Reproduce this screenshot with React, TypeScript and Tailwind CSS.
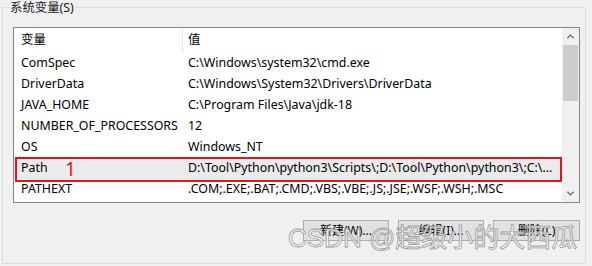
import { ChevronUp, ChevronDown } from 'lucide-react';

const rows = [
  { name: 'ComSpec', value: 'C:\\Windows\\system32\\cmd.exe' },
  { name: 'DriverData', value: 'C:\\Windows\\System32\\Drivers\\DriverData' },
  { name: 'JAVA_HOME', value: 'C:\\Program Files\\Java\\jdk-18' },
  { name: 'NUMBER_OF_PROCESSORS', value: '12' },
  { name: 'OS', value: 'Windows_NT' },
  { name: 'Path', value: 'D:\\Tool\\Python\\python3\\Scripts\\;D:\\Tool\\Python\\python3\\;C:\\...', selected: true },
  { name: 'PATHEXT', value: '.COM;.EXE;.BAT;.CMD;.VBS;.VBE;.JS;.JSE;.WSF;.WSH;.MSC' },
];

const font = "font-['Noto_Sans','Noto_Sans_CJK_SC',sans-serif]";

export default function App() {
  return (
    <div className={`w-[592px] h-[266px] bg-[#f0f0f0] overflow-hidden relative text-[12px] text-black ${font}`}>
      {/* group box */}
      <div className="relative ml-[2px] mt-[7px] w-[584px] h-[257px] border border-[#dcdcdc]">
        <span className="absolute left-[6px] top-[-8px] px-[1px] bg-[#f0f0f0] leading-[16px] text-[12.4px] text-[#1a1a1a]">
          系统变量(S)
        </span>

        {/* list view */}
        <div className="relative ml-[10px] mt-[19px] w-[567px] h-[176px] border border-[#828790] bg-white flex text-[12.4px]">
          <div className="w-[548px] overflow-hidden">
            <div className="flex h-[25px] items-center">
              <div className="w-[168px] pl-[7px] h-full flex items-center">变量</div>
              <div className="w-px h-full bg-[#e5e5e5]" />
              <div className="pl-[5px]">值</div>
            </div>
            {rows.map((r) => (
              <div
                key={r.name}
                className={`flex h-[21px] items-center whitespace-nowrap ${r.selected ? 'bg-[#ebebeb]' : ''}`}
              >
                <div className="w-[169px] pl-[7px]">{r.name}</div>
                <div className="pl-[5px]">{r.value}</div>
              </div>
            ))}
          </div>

          {/* scrollbar */}
          <div className="w-[17px] h-full bg-[#f0f0f0] flex flex-col items-center">
            <div className="h-[17px] flex items-center justify-center">
              <ChevronUp className="w-[11px] h-[11px] text-[#606060]" strokeWidth={3} />
            </div>
            <div className="w-[15px] h-[56px] bg-[#cdcdcd]" />
            <div className="flex-1" />
            <div className="h-[17px] flex items-center justify-center">
              <ChevronDown className="w-[11px] h-[11px] text-[#606060]" strokeWidth={3} />
            </div>
          </div>

          {/* annotation */}
          <div className="absolute left-[1px] top-[129px] w-[547px] h-[25px] border-2 border-[#e3131c]" />
          <span className="absolute left-[51px] top-[130px] text-[19px] leading-[22px] text-[#e3131c]">1</span>
        </div>

        {/* buttons */}
        <div className="ml-[10px] mt-[17px] w-[567px] flex justify-end gap-[9px]">
          <button className="w-[86px] h-[21px] bg-[#e1e1e1] border border-[#adadad]">新建(W)...</button>
          <button className="w-[86px] h-[21px] bg-[#e1e1e1] border border-[#adadad]">编辑(I)...</button>
          <button className="w-[87px] h-[21px] bg-[#e1e1e1] border border-[#adadad]">删除(L)</button>
        </div>
      </div>

      {/* watermark */}
      <div className="absolute left-[288px] top-[222px] text-[26px] leading-[32px] text-white/80 [-webkit-text-stroke:0.8px_#9a9a9a] font-['Liberation_Sans','Noto_Sans_CJK_SC',sans-serif] whitespace-nowrap">
        CSDN @超级小的大西瓜
      </div>
    </div>
  );
}
